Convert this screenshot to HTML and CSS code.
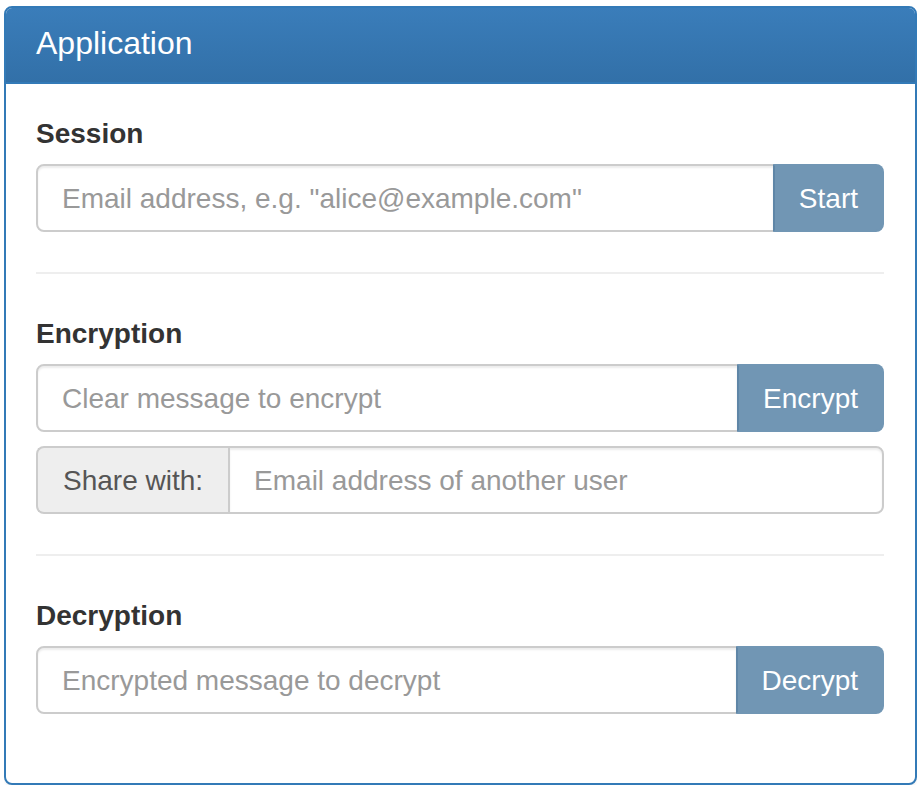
FILE: index.html
```html
<!DOCTYPE html>
<html>
<head>
<meta charset="utf-8">
<link rel="stylesheet" href="styles.css">
</head>
<body>
<div class="panel">
  <div class="panel-heading"><h3 class="panel-title">Application</h3></div>
  <div class="panel-body">
    <div class="section">
      <label class="label">Session</label>
      <div class="input-group">
        <input class="control" type="text" placeholder="Email address, e.g. &quot;alice@example.com&quot;">
        <button class="btn">Start</button>
      </div>
    </div>
    <hr class="divider">
    <div class="section">
      <label class="label">Encryption</label>
      <div class="input-group">
        <input class="control" type="text" placeholder="Clear message to encrypt">
        <button class="btn">Encrypt</button>
      </div>
      <div class="input-group share">
        <span class="addon">Share with:</span>
        <input class="control addon-control" type="text" placeholder="Email address of another user">
      </div>
    </div>
    <hr class="divider">
    <div class="section last">
      <label class="label">Decryption</label>
      <div class="input-group">
        <input class="control" type="text" placeholder="Encrypted message to decrypt">
        <button class="btn">Decrypt</button>
      </div>
    </div>
  </div>
</div>
</body>
</html>
```
FILE: styles.css
```css
* { box-sizing: border-box; }
html, body { background: #fff; }
body {
  margin: 6px 5px 0 4px;
  font-family: "Liberation Sans", Arial, Helvetica, sans-serif;
  font-size: 28px;
  color: #333;
}
.panel {
  border: 2px solid #337ab7;
  border-radius: 8px;
  background: #fff;
  box-shadow: 0 2px 2px rgba(0,0,0,.05);
  overflow: hidden;
}
.panel-heading {
  background: linear-gradient(to bottom, #3a7dba 0%, #3270a8 100%);
  padding: 18px 30px 22px;
  border-bottom: 2px solid #337ab7;
}
.panel-title {
  margin: 0;
  font-size: 32px;
  font-weight: normal;
  line-height: 34px;
  color: #fff;
}
.panel-body {
  padding: 30px 31px 30px 30px;
}
.section.last { margin-bottom: 39px; }
.label {
  display: block;
  font-weight: bold;
  font-size: 28px;
  line-height: 40px;
  margin-bottom: 10px;
  color: #333;
}
.input-group {
  display: flex;
  height: 68px;
}
.share { margin-top: 14px; }
.control {
  flex: 1;
  min-width: 0;
  height: 68px;
  margin: 0;
  padding: 13px 24px 11px;
  font-family: inherit;
  font-size: 28px;
  color: #555;
  border: 2px solid #ccc;
  border-radius: 8px 0 0 8px;
  box-shadow: inset 0 2px 2px rgba(0,0,0,.075);
  outline: none;
  background: #fff;
}
.control::placeholder { color: #999; }
.btn {
  height: 68px;
  margin: 0 0 0 -2px;
  padding: 2px 24px 0;
  font-family: inherit;
  font-size: 28px;
  color: #fff;
  background: #7196b4;
  border: 2px solid #7196b4;
  border-left-color: #5f86a7;
  border-radius: 0 8px 8px 0;
}
.addon {
  display: flex;
  align-items: center;
  height: 68px;
  padding: 2px 25px 0;
  background: #eee;
  color: #555;
  border: 2px solid #ccc;
  border-right: 0;
  border-radius: 8px 0 0 8px;
  white-space: nowrap;
}
.addon-control {
  border-radius: 0 8px 8px 0;
}
.divider {
  margin: 40px 0;
  border: 0;
  border-top: 2px solid #eee;
  height: 0;
}
```
